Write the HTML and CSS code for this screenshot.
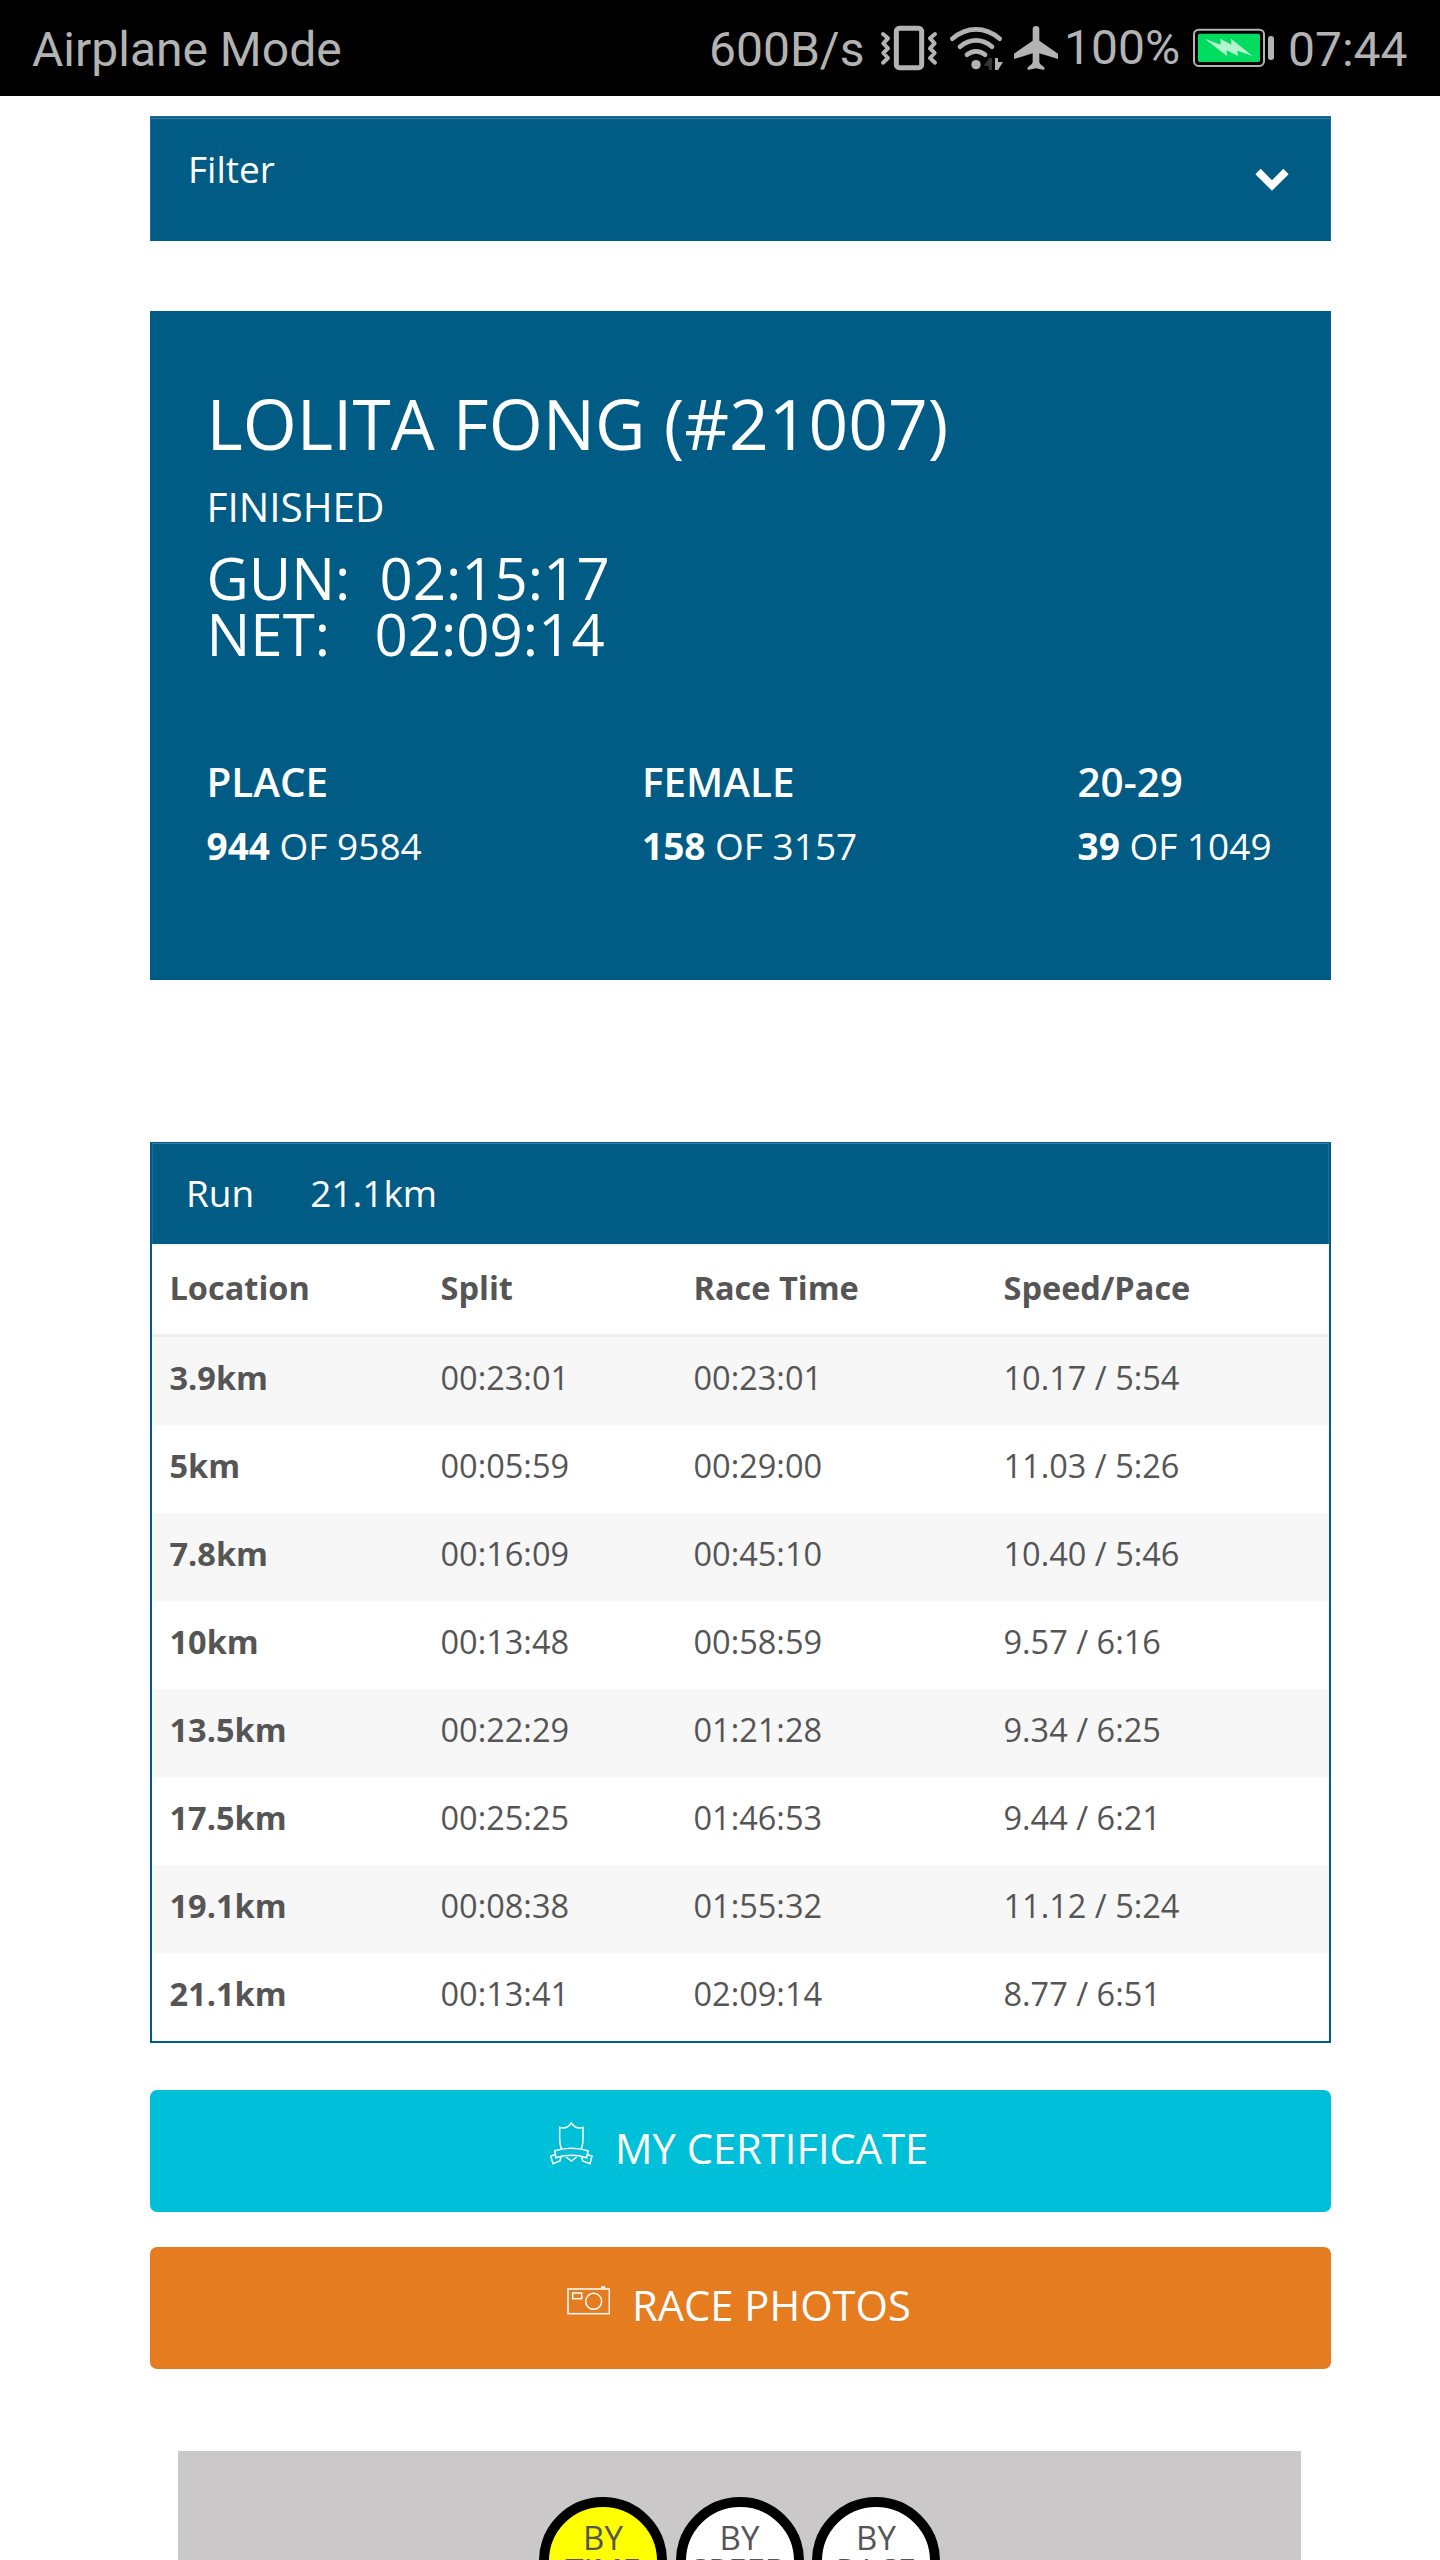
FILE: index.html
```html
<!DOCTYPE html>
<html lang="en">
<head>
<meta charset="utf-8">
<title>Race results</title>
<link rel="stylesheet" href="styles.css">
</head>
<body>
<header class="status">
  <span class="status-mode">Airplane Mode</span>
  <span class="status-rate">600B/s</span>
  <svg class="icon-radio" viewBox="0 -60 570 288" fill="none" stroke="#b3b3b3">
    <rect x="61" y="25" width="76" height="118" rx="9" stroke-width="15"/>
    <path d="M21 42L36 55 22 70 36 85 22 99 36 114 21 128M177 42L162 55 176 70 162 85 176 99 162 114 177 128" stroke-width="12" stroke-linecap="round" stroke-linejoin="round"/>
    <g stroke-width="14" stroke-linecap="round">
      <path d="M229 56Q262 28 300 28T371 56"/>
      <path d="M252 80Q274 61 300 61T348 80"/>
      <path d="M273 104Q285 94 300 94T327 104"/>
    </g>
    <g stroke="none" fill="#b3b3b3">
      <circle cx="300" cy="134" r="14"/>
      <path d="M357 114H366V126H381L366 150H357Z"/>
      <path d="M323 138L340 114H348V150H338V138Z" fill="#333"/>
      <path d="M470 28a10 10 0 0 1 20 0V62L546 101V117L490 100V126Q491 133 505 142V150L480 145 455 150V142Q469 133 470 126V100L414 117V101L470 62Z"/>
    </g>
  </svg>
  <span class="status-percent">100%</span>
  <svg class="icon-battery" viewBox="996 -30 252 288">
    <rect x="1002" y="59" width="210" height="109" rx="14" fill="none" stroke="#b3b3b3" stroke-width="6"/>
    <rect x="1014" y="71" width="186" height="85" rx="5" fill="#00dc5f"/>
    <path d="M1034 86L1082 104 1081 86 1114 104 1113 86 1178 138 1132 122 1134 138 1100 121 1101 138Z" fill="#b2f5ce"/>
    <rect x="1224" y="78" width="18" height="72" rx="8" fill="#b3b3b3"/>
  </svg>
  <span class="status-time">07:44</span>
</header>

<main class="page">
  <section class="filter">
    <span>Filter</span>
    <svg class="chevron" viewBox="0 0 34 23"><path d="M3 3.500L17 17.500 31 3.500" fill="none" stroke="#fff" stroke-width="7.500"/></svg>
  </section>

  <section class="runner">
    <h1 class="name">LOLITA FONG (#21007)</h1>
    <p class="state">FINISHED</p>
    <div class="times">
      <p class="time"><span class="time-label">GUN:</span><span>02:15:17</span></p>
      <p class="time time-net"><span class="time-label">NET:</span><span>02:09:14</span></p>
    </div>
    <div class="ranks">
      <div class="rank"><h2>PLACE</h2><p><b>944</b> OF 9584</p></div>
      <div class="rank"><h2>FEMALE</h2><p><b>158</b> OF 3157</p></div>
      <div class="rank"><h2>20-29</h2><p><b>39</b> OF 1049</p></div>
    </div>
  </section>

  <section class="splits">
    <div class="splits-head"><span>Run</span><span>21.1km</span></div>
    <table>
      <thead><tr><th>Location</th><th>Split</th><th>Race Time</th><th>Speed/Pace</th></tr></thead>
      <tbody>
        <tr><th>3.9km</th><td>00:23:01</td><td>00:23:01</td><td>10.17 / 5:54</td></tr>
        <tr><th>5km</th><td>00:05:59</td><td>00:29:00</td><td>11.03 / 5:26</td></tr>
        <tr><th>7.8km</th><td>00:16:09</td><td>00:45:10</td><td>10.40 / 5:46</td></tr>
        <tr><th>10km</th><td>00:13:48</td><td>00:58:59</td><td>9.57 / 6:16</td></tr>
        <tr><th>13.5km</th><td>00:22:29</td><td>01:21:28</td><td>9.34 / 6:25</td></tr>
        <tr><th>17.5km</th><td>00:25:25</td><td>01:46:53</td><td>9.44 / 6:21</td></tr>
        <tr><th>19.1km</th><td>00:08:38</td><td>01:55:32</td><td>11.12 / 5:24</td></tr>
        <tr><th>21.1km</th><td>00:13:41</td><td>02:09:14</td><td>8.77 / 6:51</td></tr>
      </tbody>
    </table>
  </section>

  <a class="button button-certificate">
    <svg class="icon-certificate" viewBox="150 125 129 129" fill="none" stroke="#fff" stroke-width="4.500">
      <path d="M184 206Q178 190 179 165V141Q199 149 214 128Q229 149 249 141V165Q250 190 244 206"/>
      <path d="M164 211Q214 196 264 211L260 232Q214 218 168 232Z"/>
      <path d="M165 223L152 227 159 250 180 242 183 229M263 223L276 227 270 250 248 242 245 229M198 230L214 242 230 230"/>
    </svg>
    <span>MY CERTIFICATE</span>
  </a>
  <a class="button button-photos">
    <svg class="icon-camera" viewBox="201 617 129 87" fill="none" stroke="#fff" stroke-width="4.500">
      <rect x="204" y="626" width="124" height="74"/>
      <rect x="218" y="638" width="27" height="17"/>
      <circle cx="281" cy="663" r="24"/>
      <path d="M303 621H316" stroke-width="6"/>
    </svg>
    <span>RACE PHOTOS</span>
  </a>

  <section class="chart">
    <div class="mode mode-active">BY<br>TIME</div>
    <div class="mode">BY<br>SPEED</div>
    <div class="mode">BY<br>PACE</div>
  </section>
</main>
</body>
</html>
```
FILE: styles.css
```css
* { box-sizing: border-box; }
body {
  margin: 0;
  height: 2560px;
  overflow: hidden;
  background: #fff;
  color: #555;
  font-family: "Open Sans", "Noto Sans", sans-serif;
}
h1, h2, p { margin: 0; font-weight: 400; }

.status {
  display: grid;
  grid-template-columns: 677px 167px 188px 128px 84px auto;
  height: 96px;
  padding-left: 32px;
  background: #000;
  color: #b3b3b3;
  font: 48px/99px Roboto, sans-serif;
  white-space: nowrap;
}
.icon-radio { width: 190px; height: 96px; }
.icon-battery { width: 84px; height: 96px; }
.status-percent { line-height: 95px; }
.status-time { padding-left: 12px; }

.page { width: 1181px; margin-left: 150px; padding-top: 20px; }

.filter {
  display: flex;
  justify-content: space-between;
  height: 125px;
  padding: 27px 41px 0 37px;
  border: 1px solid #1d6d96;
  border-bottom-color: #005c85;
  background: #005c85;
  box-shadow: inset 0 1px #005c85, inset 0 2px #3a7fa1;
  color: #fff;
  font-size: 37px;
  line-height: 50px;
}
.chevron { width: 34px; height: 23px; margin-top: 24px; }

.runner {
  height: 669px;
  margin-top: 70px;
  padding: 67px 0 0 56.500px;
  background: #005c85;
  color: #fff;
}
.name { font-size: 69.500px; line-height: 90px; }
.state { margin-top: 12px; font-size: 40.500px; line-height: 54px; }
.times { margin-top: 16px; font-size: 58.200px; line-height: 56px; }
.time { display: flex; }
.time-label { width: 173px; }
.time-net .time-label { width: 168px; }
.ranks {
  display: grid;
  grid-template-columns: 435.500px 435.500px auto;
  margin-top: 90px;
}
.rank h2 { font-size: 40.400px; font-weight: 600; line-height: 60px; }
.rank p { font-size: 37px; line-height: 67px; }

.splits {
  height: 901px;
  margin-top: 162px;
  border: 2px solid #005c85;
}
.splits-head {
  display: flex;
  gap: 56px;
  height: 101px;
  margin-top: -1px;
  padding-left: 34px;
  background: #005c85;
  box-shadow: inset 0 1px #3a7fa1, inset 1px 0 #1d6d96, inset -1px 0 #1d6d96;
  color: #fff;
  font-size: 37px;
  line-height: 100px;
}
table { width: 100%; border-spacing: 0; table-layout: fixed; font-size: 32.500px; }
th, td { height: 88px; padding: 0 0 6px 17.500px; text-align: left; line-height: 82px; }
thead th { height: 93px; padding-bottom: 4px; border-top: 2px solid #f4f4f4; border-bottom: 3px solid #ecefee; }
thead th:nth-child(1) { width: 271px; }
thead th:nth-child(2) { width: 253px; }
thead th:nth-child(3) { width: 310px; }
tbody tr:nth-child(odd) { background: #f7f7f7; }

.button {
  display: flex;
  height: 122px;
  border-radius: 7px;
  color: #fff;
  font-size: 41.700px;
  line-height: 116px;
}
.button-certificate { margin-top: 47px; padding-left: 400px; background: #00bfd9; }
.button-photos { margin-top: 35px; padding-left: 417px; background: #e57c20; }
.icon-certificate { width: 43px; height: 43px; margin: 32px 22px 0 0; }
.icon-camera { width: 43px; height: 29px; margin: 39px 22px 0 0; }

.chart {
  display: flex;
  gap: 8.500px;
  height: 109px;
  margin: 82px 30px 0 28px;
  padding: 46px 0 0 361px;
  background: #cac8c9;
  overflow: hidden;
}
.mode {
  width: 128px;
  height: 128px;
  padding-top: 14px;
  border: 10px solid #000;
  border-radius: 50%;
  background: #fff;
  font-size: 33px;
  line-height: 33px;
  text-align: center;
}
.mode-active { background: #ff0; }
```
